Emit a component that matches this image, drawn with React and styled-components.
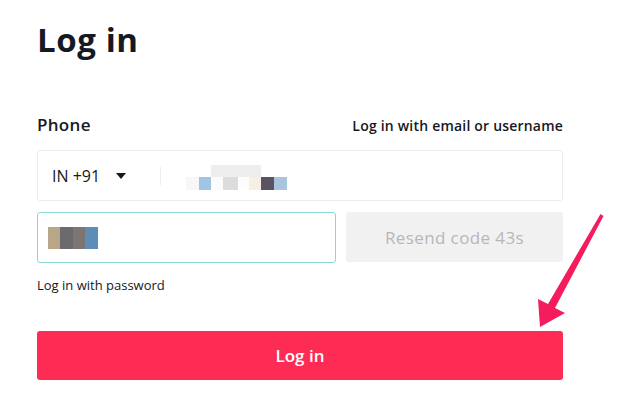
import React from "react";
import styled, { createGlobalStyle } from "styled-components";

const GlobalStyle = createGlobalStyle`
  html, body {
    margin: 0;
    padding: 0;
    background: #fff;
  }
  body {
    font-family: "Open Sans", "Liberation Sans", sans-serif;
    color: #161823;
  }
`;

// blurred bits of the phone number / code, read off the screenshot
const phoneTop = [{ w: 50, c: "#eeeeee" }];
const phoneBottom = [
  { w: 13, c: "#f7f7f9" },
  { w: 12, c: "#9fc4e4" },
  { w: 12, c: "#fbfbfb" },
  { w: 15, c: "#dcdcdc" },
  { w: 11, c: "#fdfdfd" },
  { w: 12, c: "#f7efe4" },
  { w: 13, c: "#5b5262" },
  { w: 13, c: "#a9c5de" },
];
const codeCells = [
  { w: 12, c: "#b9a588" },
  { w: 13, c: "#6b6b6d" },
  { w: 12, c: "#7b7672" },
  { w: 13, c: "#5d8cb6" },
];

export default function App() {
  return (
    <Page>
      <GlobalStyle />
      <Title>Log in</Title>
      <LabelRow>
        <Label>Phone</Label>
        <SwitchLink>Log in with email or username</SwitchLink>
      </LabelRow>
      <PhoneBox>
        <Country>
          IN +91
          <Caret />
        </Country>
        <Divider />
        <Blur>
          <BlurRow $indent={25}>
            {phoneTop.map((p, i) => (
              <Cell key={i} style={{ width: p.w, background: p.c }} $h={12} />
            ))}
          </BlurRow>
          <BlurRow>
            {phoneBottom.map((p, i) => (
              <Cell key={i} style={{ width: p.w, background: p.c }} $h={13} />
            ))}
          </BlurRow>
        </Blur>
      </PhoneBox>
      <CodeRow>
        <CodeBox>
          <BlurRow>
            {codeCells.map((p, i) => (
              <Cell key={i} style={{ width: p.w, background: p.c }} $h={22} />
            ))}
          </BlurRow>
        </CodeBox>
        <Resend>Resend code 43s</Resend>
      </CodeRow>
      <PasswordLink>Log in with password</PasswordLink>
      <SubmitWrap>
        <Submit>Log in</Submit>
        <Arrow width="70" height="116" viewBox="0 0 70 116">
          <path
            d="M62.5 1 L65.5 3 L17 95 L27 100 L2 114 L0 86 L10 91 Z"
            fill="#f41c5c"
          />
        </Arrow>
      </SubmitWrap>
    </Page>
  );
}

const Page = styled.div`
  width: 526px;
  padding: 20px 0 0 37px;
  display: flex;
  flex-direction: column;
`;

const Title = styled.h1`
  margin: 0;
  font-size: 33px;
  font-weight: 700;
  line-height: 40px;
  letter-spacing: 0.6px;
  color: #161823;
`;

const LabelRow = styled.div`
  display: flex;
  justify-content: space-between;
  align-items: baseline;
  margin-top: 54px;
`;

const Label = styled.span`
  font-size: 17px;
  font-weight: 600;
  line-height: 22px;
  letter-spacing: 0.3px;
`;

const SwitchLink = styled.span`
  font-size: 14px;
  font-weight: 600;
  line-height: 22px;
  letter-spacing: 0.2px;
  color: #161823;
`;

const PhoneBox = styled.div`
  margin-top: 13px;
  height: 51px;
  box-sizing: border-box;
  border: 1px solid #ececec;
  border-radius: 3px;
  display: flex;
  align-items: center;
  padding-left: 14px;
`;

const Country = styled.div`
  display: flex;
  align-items: center;
  font-size: 16px;
  color: #161823;
  width: 96px;
`;

const Caret = styled.span`
  margin-left: 16px;
  width: 0;
  height: 0;
  border-left: 5px solid transparent;
  border-right: 5px solid transparent;
  border-top: 6px solid #161823;
`;

const Divider = styled.span`
  width: 1px;
  height: 18px;
  background: #ececec;
  margin-left: 12px;
`;

const Blur = styled.div`
  margin-left: 25px;
  margin-top: 4px;
  display: flex;
  flex-direction: column;
`;

const BlurRow = styled.div`
  display: flex;
  padding-left: ${(p) => p.$indent || 0}px;
`;

const Cell = styled.span`
  display: block;
  height: ${(p) => p.$h}px;
`;

const CodeRow = styled.div`
  margin-top: 11px;
  display: flex;
  gap: 10px;
`;

const CodeBox = styled.div`
  width: 299px;
  height: 51px;
  box-sizing: border-box;
  border: 1px solid #8ad8d4;
  border-radius: 3px;
  display: flex;
  align-items: center;
  padding-left: 10px;
`;

const Resend = styled.div`
  flex: 1;
  height: 50px;
  border-radius: 3px;
  background: #f1f1f2;
  color: #b7b7ba;
  font-size: 17px;
  letter-spacing: 0.4px;
  display: flex;
  align-items: center;
  justify-content: center;
`;

const PasswordLink = styled.span`
  margin-top: 14px;
  font-size: 13px;
  line-height: 17px;
  color: #161823;
  font-weight: 500;
`;

const SubmitWrap = styled.div`
  position: relative;
  margin-top: 37px;
`;

const Submit = styled.button`
  width: 100%;
  height: 49px;
  border: none;
  border-radius: 3px;
  background: #fe2c55;
  color: #fff;
  font-family: inherit;
  font-size: 17px;
  font-weight: 600;
  cursor: pointer;
`;

const Arrow = styled.svg`
  position: absolute;
  left: 501px;
  top: -118px;
`;
